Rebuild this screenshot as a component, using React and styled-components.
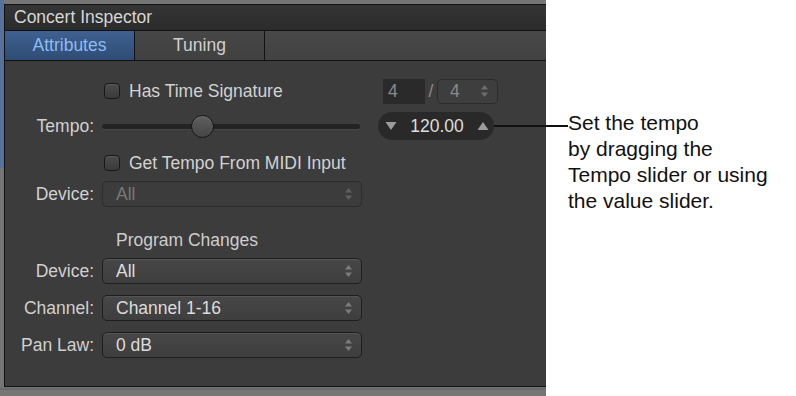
import React from "react";
import styled, { createGlobalStyle } from "styled-components";

const GlobalStyle = createGlobalStyle`
  html, body { margin: 0; padding: 0; background: #ffffff; }
  body { font-family: "Liberation Sans", Arial, Helvetica, sans-serif; }
`;

const Page = styled.div`
  display: flex;
  width: 796px;
  height: 396px;
  overflow: hidden;
  background: #ffffff;
`;

const Frame = styled.div`
  flex: none;
  width: 546px;
  height: 396px;
  box-sizing: border-box;
  padding: 4px 0 9px 4px;
  display: flex;
  background:
    linear-gradient(#57719a, #57719a) 0 0 / 4px 168px no-repeat,
    linear-gradient(#6a6a6a, #6a6a6a) 0 388px / 100% 2px no-repeat,
    #767676;
`;

const Inspector = styled.div`
  flex: 1;
  display: flex;
  flex-direction: column;
  background: #3c3c3c;
  border: 1px solid #121212;
  border-right: none;
  color: #d2d2d2;
  font-size: 17.5px;
`;

const TitleBar = styled.div`
  height: 25px;
  display: flex;
  align-items: center;
  padding-left: 9px;
  background: linear-gradient(#353535, #2b2b2b);
  border-bottom: 1px solid #121212;
  color: #d6d6d6;
`;

const TabBar = styled.div`
  height: 29px;
  display: flex;
  background: linear-gradient(#484848, #424242);
  border-bottom: 1px solid #121212;
`;

const Tab = styled.div`
  width: 129px;
  display: flex;
  align-items: center;
  justify-content: center;
  border-right: 1px solid #121212;
  background: ${({ $active }) =>
    $active ? "linear-gradient(#3f6190, #2e4c75)" : "linear-gradient(#474747, #404040)"};
  color: ${({ $active }) => ($active ? "#8cbcf0" : "#cfcfcf")};
`;

const Content = styled.div`
  display: flex;
  flex-direction: column;
`;

const Row = styled.div`
  display: flex;
  align-items: center;
  gap: 8px;
  height: ${({ $h }) => $h || 26}px;
  margin-top: ${({ $top }) => $top}px;
`;

const Label = styled.div`
  flex: none;
  width: 89px;
  text-align: right;
  color: #d0d0d0;
  white-space: nowrap;
`;

const CheckArea = styled.label`
  flex: none;
  width: 271px;
  padding-left: 2px;
  display: flex;
  align-items: center;
  gap: 9px;
  white-space: nowrap;
`;

const Checkbox = styled.span`
  flex: none;
  width: 14px;
  height: 14px;
  border-radius: 4px;
  border: 1px solid #161616;
  background: linear-gradient(#4b4b4b, #3b3b3b);
  box-shadow: inset 0 1px 0 rgba(255, 255, 255, 0.08);
`;

const TimeSig = styled.div`
  display: flex;
  align-items: center;
  color: #8a8a8a;
`;

const NumBox = styled.div`
  width: 37px;
  height: 25px;
  padding-left: 5px;
  display: flex;
  align-items: center;
  background: #2a2a2a;
`;

const Slash = styled.span`
  width: 12px;
  text-align: center;
`;

const StepBox = styled.div`
  width: 47px;
  height: 23px;
  padding: 0 0 0 12px;
  display: flex;
  align-items: center;
  justify-content: space-between;
  border: 1px solid #2c2c2c;
  border-radius: 5px;
  background: #3e3e3e;
`;

const Track = styled.div`
  position: relative;
  flex: none;
  width: 258px;
  height: 5px;
  border-radius: 3px;
  background: #232323;
  box-shadow: 0 1px 0 rgba(255, 255, 255, 0.06);
`;

const Knob = styled.div`
  position: absolute;
  left: ${({ $x }) => $x}px;
  top: -9px;
  width: 21px;
  height: 21px;
  border-radius: 50%;
  border: 1px solid #161616;
  background: linear-gradient(#5f5f5f, #454545);
  box-shadow: inset 0 1px 0 rgba(255, 255, 255, 0.12);
`;

const ValueSlider = styled.div`
  position: relative;
  flex: none;
  width: 116px;
  height: 28px;
  margin-left: 10px;
  box-sizing: border-box;
  padding: 0 5px 0 7px;
  display: flex;
  align-items: center;
  justify-content: space-between;
  border-radius: 14px;
  background: #292929;
  color: #dedede;

  &::after {
    content: "";
    position: absolute;
    left: 100%;
    top: 13px;
    width: 74px;
    height: 2px;
    background: #111111;
  }
`;

const Select = styled.div`
  flex: none;
  width: 245px;
  height: 24px;
  padding: 0 0 0 13px;
  display: flex;
  align-items: center;
  justify-content: space-between;
  border: 1px solid ${({ $disabled }) => ($disabled ? "#2c2c2c" : "#1e1e1e")};
  border-radius: 5px;
  background: ${({ $disabled }) =>
    $disabled ? "#3c3c3c" : "linear-gradient(#474747, #3e3e3e)"};
  box-shadow: ${({ $disabled }) =>
    $disabled ? "none" : "inset 0 1px 0 rgba(255, 255, 255, 0.07)"};
  color: ${({ $disabled }) => ($disabled ? "#777777" : "#dcdcdc")};
`;

const Heading = styled.div`
  padding-left: 14px;
  color: #cdcdcd;
`;

const Callout = styled.div`
  margin: 110px 0 0 22px;
  font-family: "Liberation Sans", Arial, Helvetica, sans-serif;
  font-size: 21px;
  line-height: 26px;
  color: #111111;
  white-space: nowrap;
`;

const Updown = ({ color = "#7c7c7c", style }) => (
  <svg width="9" height="14" viewBox="0 0 9 14" style={style}>
    <path d="M4.5 1 L8 5.5 L1 5.5 Z" fill={color} />
    <path d="M4.5 13 L8 8.5 L1 8.5 Z" fill={color} />
  </svg>
);

const Arrow = ({ up }) => (
  <svg width="12" height="10" viewBox="0 0 12 10">
    <path d={up ? "M6 1 L11.5 9 L0.5 9 Z" : "M6 9 L11.5 1 L0.5 1 Z"} fill="#9c9c9c" />
  </svg>
);

const PopUp = ({ children, disabled }) => (
  <Select $disabled={disabled}>
    <span>{children}</span>
    <Updown color={disabled ? "#5e5e5e" : "#7c7c7c"} style={{ marginRight: 8 }} />
  </Select>
);

export default function App() {
  return (
    <>
      <GlobalStyle />
      <Page>
        <Frame>
          <Inspector>
            <TitleBar>Concert Inspector</TitleBar>
            <TabBar>
              <Tab $active>Attributes</Tab>
              <Tab>Tuning</Tab>
            </TabBar>
            <Content>
              <Row $top={17} $h={26}>
                <Label />
                <CheckArea>
                  <Checkbox />
                  Has Time Signature
                </CheckArea>
                <TimeSig>
                  <NumBox>4</NumBox>
                  <Slash>/</Slash>
                  <StepBox>
                    <span>4</span>
                    <Updown color="#6e6e6e" style={{ marginRight: 8 }} />
                  </StepBox>
                </TimeSig>
              </Row>
              <Row $top={8} $h={28}>
                <Label>Tempo:</Label>
                <Track>
                  <Knob $x={89} />
                </Track>
                <ValueSlider>
                  <Arrow />
                  <span>120.00</span>
                  <Arrow up />
                </ValueSlider>
              </Row>
              <Row $top={10} $h={26}>
                <Label />
                <CheckArea>
                  <Checkbox />
                  Get Tempo From MIDI Input
                </CheckArea>
              </Row>
              <Row $top={5}>
                <Label>Device:</Label>
                <PopUp disabled>All</PopUp>
              </Row>
              <Row $top={20}>
                <Label />
                <Heading>Program Changes</Heading>
              </Row>
              <Row $top={5}>
                <Label>Device:</Label>
                <PopUp>All</PopUp>
              </Row>
              <Row $top={11}>
                <Label>Channel:</Label>
                <PopUp>Channel 1-16</PopUp>
              </Row>
              <Row $top={11}>
                <Label>Pan Law:</Label>
                <PopUp>0 dB</PopUp>
              </Row>
            </Content>
          </Inspector>
        </Frame>
        <Callout>
          Set the tempo
          <br />
          by dragging the
          <br />
          Tempo slider or using
          <br />
          the value slider.
        </Callout>
      </Page>
    </>
  );
}
